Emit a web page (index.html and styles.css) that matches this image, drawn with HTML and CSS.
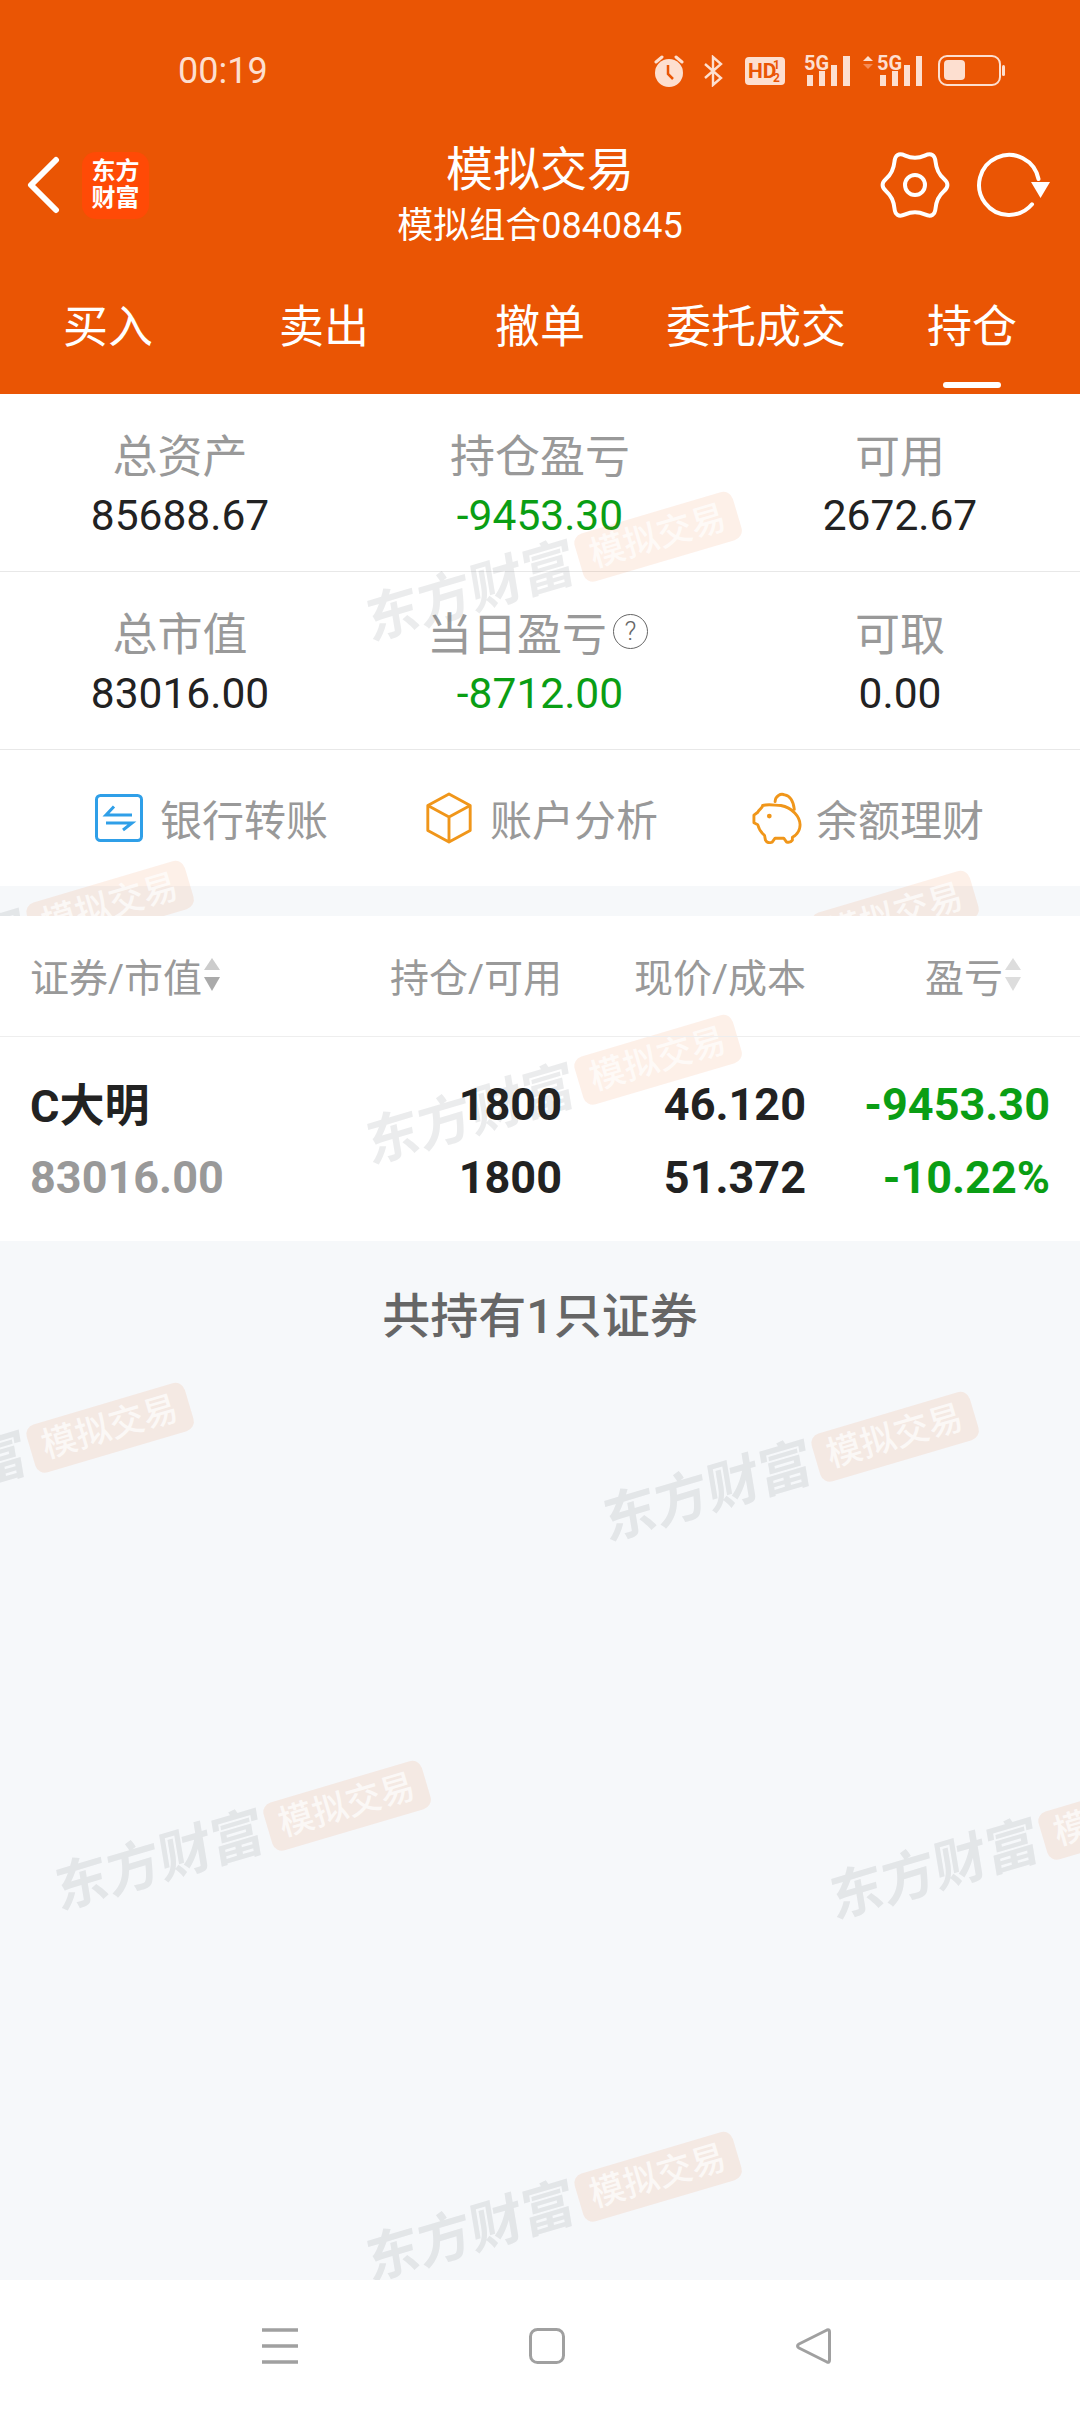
FILE: index.html
```html
<!DOCTYPE html>
<html lang="zh-CN">
<head>
    <meta charset="UTF-8">
    <meta name="viewport" content="width=device-width, initial-scale=1.0">
    <title>模拟交易</title>
    <link rel="stylesheet" href="styles.css">
</head>
<body>
<div class="screen">
    <header class="top">
        <div class="status">
            <span class="time">00:19</span>
            <div class="status-icons">
                <svg class="gap-18" width="32" height="32" viewBox="0 0 32 32">
                    <circle cx="16" cy="18" r="14" fill="#fddfd0"/>
                    <path d="M3 7 L9 2 M29 7 L23 2" stroke="#fddfd0" stroke-width="3" stroke-linecap="round"/>
                    <path d="M15 10 V19 L20 24" fill="none" stroke="#ea5504" stroke-width="2.5"/>
                </svg>
                <svg class="gap-22" width="20" height="32" viewBox="0 0 20 32">
                    <path d="M2 9 L18 23 L10 30 V2 L18 9 L2 23" fill="none" stroke="#fddfd0" stroke-width="2.4"/>
                </svg>
                <svg class="gap-19" width="40" height="28" viewBox="0 0 40 28">
                    <rect width="40" height="28" rx="4" fill="#fddfd0"/>
                    <text x="3" y="21" class="svg-hd">HD</text>
                    <text x="28" y="12" class="svg-frac">1</text>
                    <text x="28" y="25" class="svg-frac">2</text>
                </svg>
                <svg class="gap-13" width="46" height="32" viewBox="0 0 46 32">
                    <text x="0" y="15" class="svg-5g">5G</text>
                    <path d="M3 20 h6 v11 h-6z M15 16 h6 v15 h-6z M27 10 h6 v21 h-6z M39 1 h7 v30 h-7z" fill="#fddfd0"/>
                </svg>
                <svg class="gap-16" width="59" height="32" viewBox="0 0 59 32">
                    <path d="M0 6 L5 1 L10 6z" fill="#fddfd0"/>
                    <path d="M0 9 L5 14 L10 9z" fill="#f58a55"/>
                    <text x="14" y="15" class="svg-5g">5G</text>
                    <path d="M17 20 h6 v11 h-6z M29 16 h6 v15 h-6z M41 10 h6 v21 h-6z M53 1 h6 v30 h-6z" fill="#fddfd0"/>
                </svg>
                <svg width="67" height="32" viewBox="0 0 67 32">
                    <rect x="1" y="1" width="61" height="29" rx="8" fill="none" stroke="#fddfd0" stroke-width="2"/>
                    <rect x="6" y="5" width="21" height="20" rx="4" fill="#fddfd0"/>
                    <rect x="64" y="10" width="3" height="11" rx="1.5" fill="#fddfd0"/>
                </svg>
            </div>
        </div>

        <div class="nav">
            <div class="nav-side">
                <svg class="back" width="34" height="58" viewBox="0 0 34 58">
                    <path d="M30 4 L5 29 L30 54" fill="none" stroke="#fff" stroke-width="6" stroke-linecap="round" stroke-linejoin="round"/>
                </svg>
                <div class="logo">东方<br>财富</div>
            </div>
            <div class="nav-title">
                <div class="title">模拟交易</div>
                <div class="subtitle">模拟组合0840845</div>
            </div>
            <div class="nav-side nav-right">
                <svg width="80" height="80" viewBox="-40 -40 80 80">
                    <path d="M28.83 -6.25 Q21.65 -12.5 20.58 -23.14 Q19.5 -33.77 9.75 -29.39 Q0 -25 -9.75 -29.39 Q-19.5 -33.77 -20.58 -23.14 Q-21.65 -12.5 -28.83 -6.25 Q-36 0 -28.83 6.25 Q-21.65 12.5 -20.58 23.14 Q-19.5 33.77 -9.75 29.39 Q0 25 9.75 29.39 Q19.5 33.77 20.58 23.14 Q21.65 12.5 28.83 6.25 Q36 0 28.83 -6.25Z" fill="none" stroke="#fff" stroke-width="4" stroke-linejoin="round"/>
                    <circle r="10" fill="none" stroke="#fff" stroke-width="4"/>
                </svg>
                <svg class="refresh" width="80" height="80" viewBox="0 0 80 80">
                    <path d="M57 59.3 A30 30 0 1 1 63.5 34" fill="none" stroke="#fff" stroke-width="4" stroke-linecap="round"/>
                    <path d="M56 37 H75 L65.5 53Z" fill="#fff"/>
                </svg>
            </div>
        </div>

        <nav class="tabs">
            <a class="tab">买入</a>
            <a class="tab">卖出</a>
            <a class="tab">撤单</a>
            <a class="tab">委托成交</a>
            <a class="tab active">持仓</a>
        </nav>
    </header>

    <main class="content">
        <section class="summary">
            <div class="cell"><div class="cell-label">总资产</div><div class="cell-value">85688.67</div></div>
            <div class="cell"><div class="cell-label">持仓盈亏</div><div class="cell-value green">-9453.30</div></div>
            <div class="cell"><div class="cell-label">可用</div><div class="cell-value">2672.67</div></div>
        </section>
        <section class="summary">
            <div class="cell"><div class="cell-label">总市值</div><div class="cell-value">83016.00</div></div>
            <div class="cell">
                <div class="cell-label">当日盈亏<span class="help">?</span></div>
                <div class="cell-value green">-8712.00</div>
            </div>
            <div class="cell"><div class="cell-label">可取</div><div class="cell-value">0.00</div></div>
        </section>

        <section class="actions">
            <a class="action">
                <svg width="48" height="48" viewBox="0 0 48 48">
                    <rect x="1.500" y="1.500" width="45" height="45" rx="4" fill="none" stroke="#2f9fe8" stroke-width="3"/>
                    <path d="M19 12.500 L11 21 H37 M11 29 H37 L28 36" fill="none" stroke="#2f9fe8" stroke-width="3"/>
                </svg>
                银行转账
            </a>
            <a class="action">
                <svg width="48" height="52" viewBox="0 0 48 54">
                    <path d="M24 2 L46 14 V40 L24 52 L2 40 V14Z M2 14 L24 26 L46 14 M24 26 V52" fill="none" stroke="#f0961a" stroke-width="3" stroke-linejoin="round"/>
                </svg>
                账户分析
            </a>
            <a class="action action-save">
                <svg width="50" height="52" viewBox="0 0 52 54">
                    <path d="M11 14 C18 12 24 14 30 14 C42 16 50 26 50 34 C50 42 44 46 42 47 V50 Q40 53 36 52 L33 48 H24 L21 52 Q16 54 14 50 L13 45 C9 42 7 38 6 34 L2 32 V24 L6 21 C7 18 11 17 11 14Z" fill="none" stroke="#f0961a" stroke-width="3" stroke-linejoin="round"/>
                    <path d="M24 10 C24 4 30 1 34 3 C40 4 43 10 44 18" fill="none" stroke="#f0961a" stroke-width="3" stroke-linecap="round"/>
                    <circle cx="18" cy="25" r="2.500" fill="#f0961a"/>
                </svg>
                余额理财
            </a>
        </section>

        <section class="holdings">
            <div class="wm-layer">
                <div class="wm wm-table"><span class="wm-text">东方财富</span><span class="wm-badge">模拟交易</span></div>
            </div>
            <div class="row head">
                <div class="col-name">证券/市值<svg class="sort" width="18" height="34" viewBox="0 0 18 34"><path d="M9 0 L17 12 H1Z" fill="#ccc"/><path d="M9 33 L17 19 H1Z" fill="#aaa"/></svg></div>
                <div class="num">持仓/可用</div>
                <div class="num">现价/成本</div>
                <div class="num col-pl">盈亏<svg class="sort" width="18" height="34" viewBox="0 0 18 34"><path d="M9 0 L17 12 H1Z" fill="#ddd"/><path d="M9 33 L17 19 H1Z" fill="#ddd"/></svg></div>
            </div>
            <div class="row stock">
                <div class="stock-name">C大明</div>
                <div class="num">1800</div>
                <div class="num">46.120</div>
                <div class="num green">-9453.30</div>
                <div class="stock-cap">83016.00</div>
                <div class="num">1800</div>
                <div class="num">51.372</div>
                <div class="num green">-10.22%</div>
            </div>
        </section>

        <p class="total">共持有1只证券</p>
    </main>

    <div class="wm-layer wm-page">
        <div class="wm wm-1"><span class="wm-text">东方财富</span><span class="wm-badge">模拟交易</span></div>
        <div class="wm wm-2"><span class="wm-text">东方财富</span><span class="wm-badge">模拟交易</span></div>
        <div class="wm wm-3"><span class="wm-text">东方财富</span><span class="wm-badge">模拟交易</span></div>
        <div class="wm wm-4"><span class="wm-text">东方财富</span><span class="wm-badge">模拟交易</span></div>
        <div class="wm wm-5"><span class="wm-text">东方财富</span><span class="wm-badge">模拟交易</span></div>
        <div class="wm wm-6"><span class="wm-text">东方财富</span><span class="wm-badge">模拟交易</span></div>
        <div class="wm wm-7"><span class="wm-text">东方财富</span><span class="wm-badge">模拟交易</span></div>
        <div class="wm wm-8"><span class="wm-text">东方财富</span><span class="wm-badge">模拟交易</span></div>
    </div>

    <footer class="sysnav">
        <svg width="36" height="36" viewBox="0 0 36 36">
            <path d="M0 2 H36 M0 18 H36 M0 34 H36" stroke="#a0a0a0" stroke-width="3.5"/>
        </svg>
        <svg width="36" height="36" viewBox="0 0 36 36">
            <rect x="1.500" y="1.500" width="33" height="33" rx="7" fill="none" stroke="#a0a0a0" stroke-width="3"/>
        </svg>
        <svg width="35" height="36" viewBox="0 0 35 36">
            <path d="M31 2 Q33.500 1 33.500 4 V32 Q33.500 35 31 34 L3 20 Q0 18 3 16Z" fill="none" stroke="#a0a0a0" stroke-width="3" stroke-linejoin="round"/>
        </svg>
    </footer>
</div>
</body>
</html>
```

FILE: styles.css
```css
* {
    box-sizing: border-box;
}
body {
    margin: 0;
    font-family: Roboto, "Noto Sans CJK SC", sans-serif;
    color: #222;
}
.screen {
    position: relative;
    display: flex;
    flex-direction: column;
    width: 1080px;
    height: 2412px;
    overflow: hidden;
    background: #f6f8fa;
}
.green {
    color: #0a9e14;
}

/* orange header */
.top {
    position: relative;
    z-index: 3;
    height: 394px;
    background: #ea5504;
    color: #fff;
}
.status {
    display: flex;
    justify-content: space-between;
    align-items: center;
    height: 142px;
    padding: 0 75px 0 178px;
    color: #fddfd0;
}
.time {
    font-size: 36px;
}
.status-icons {
    display: flex;
    align-items: center;
}
.gap-13 { margin-right: 13px; }
.gap-16 { margin-right: 16px; }
.gap-18 { margin-right: 18px; }
.gap-19 { margin-right: 19px; }
.gap-22 { margin-right: 22px; }
.svg-hd {
    font-size: 21px;
    font-weight: 700;
    fill: #ea5504;
}
.svg-frac {
    font-size: 12px;
    font-weight: 700;
    fill: #ea5504;
}
.svg-5g {
    font-size: 20px;
    font-weight: 700;
    fill: #fddfd0;
}
.nav {
    display: grid;
    grid-template-columns: 1fr auto 1fr;
    height: 120px;
}
.nav-side {
    display: flex;
    align-items: center;
    height: 86px;
}
.nav-right {
    justify-content: flex-end;
    padding-right: 25px;
}
.back {
    margin: 0 22px 0 26px;
}
.logo {
    width: 67px;
    height: 67px;
    border-radius: 14px;
    background: #ff4a06;
    font-size: 24px;
    font-weight: 700;
    line-height: 27px;
    text-align: center;
    padding-top: 6px;
}
.refresh {
    margin-left: 20px;
}
.nav-title {
    text-align: center;
    line-height: 56px;
}
.title {
    font-size: 47px;
}
.subtitle {
    font-size: 36px;
}
.tabs {
    display: grid;
    grid-template-columns: repeat(5, 1fr);
    height: 132px;
}
.tab {
    position: relative;
    display: flex;
    align-items: center;
    justify-content: center;
    padding-bottom: 10px;
    font-size: 45px;
}
.tab.active::after {
    content: "";
    position: absolute;
    left: 79px;
    bottom: 6px;
    width: 58px;
    height: 6px;
    border-radius: 3px;
    background: #fff;
}

/* summary cells */
.summary {
    display: grid;
    grid-template-columns: repeat(3, 1fr);
    height: 178px;
    background: #fff;
    border-bottom: 1px solid #e8e8e8;
    text-align: center;
}
.cell {
    padding-top: 31px;
}
.cell-label {
    display: flex;
    align-items: center;
    justify-content: center;
    height: 56px;
    margin-bottom: 2px;
    font-size: 45px;
    color: #999;
}
.cell-value {
    font-size: 42.500px;
    line-height: 66px;
}
.help {
    width: 35px;
    height: 35px;
    margin: 0 5px 0 6px;
    border: 1.5px solid #666;
    border-radius: 50%;
    font-size: 26px;
    font-weight: 300;
    line-height: 32px;
    color: #666;
}

.actions {
    display: flex;
    align-items: center;
    gap: 97px;
    height: 136px;
    padding: 0 0 2px 95px;
    background: #fff;
}
.action {
    display: flex;
    align-items: center;
    gap: 17px;
    font-size: 42px;
    color: #999;
}
.action svg {
    margin-top: 2px;
}
.action-save {
    gap: 14px;
    margin-left: -3px;
}

/* holdings table */
.holdings {
    position: relative;
    z-index: 2;
    margin-top: 30px;
    background: #fff;
}
.row {
    position: relative;
    display: grid;
    grid-template-columns: 1fr 244px 244px 244px;
    padding: 0 30px;
}
.head {
    align-items: center;
    height: 121px;
    padding-bottom: 2px;
    border-bottom: 1px solid #eee;
    font-size: 39px;
    color: #999;
}
.col-name {
    display: flex;
    align-items: center;
}
.sort {
    margin-left: 1px;
}
.col-pl {
    display: flex;
    align-items: center;
    justify-content: flex-end;
    padding-right: 28px;
}
.stock {
    height: 204px;
    padding-top: 31px;
    grid-auto-rows: 73px;
    align-items: center;
    font-size: 45px;
    font-weight: 700;
}
.stock-name {
    padding-bottom: 5px;
}
.num {
    text-align: right;
}
.stock-cap {
    color: #999;
}
.total {
    margin: 46px 0 0;
    font-size: 48px;
    font-weight: 500;
    line-height: 60px;
    text-align: center;
    color: #666;
}
.content {
    flex: 1;
}

/* diagonal watermark */
.wm-layer {
    position: absolute;
    inset: 0;
    overflow: hidden;
    pointer-events: none;
}
.wm-page {
    z-index: 1;
}
.wm {
    position: absolute;
    display: flex;
    align-items: center;
    gap: 5px;
    transform: rotate(-16.500deg);
    transform-origin: 0 0;
    white-space: nowrap;
}
.wm-text {
    width: 216px;
    font-size: 54px;
    font-weight: 700;
    line-height: 50px;
    color: rgba(110, 120, 130, 0.14);
    transform: skewX(-7deg);
}
.wm-badge {
    width: 165px;
    height: 50px;
    border-radius: 10px;
    background: rgba(234, 85, 4, 0.09);
    font-size: 35px;
    font-weight: 500;
    line-height: 50px;
    text-align: center;
    color: rgba(255, 255, 255, 0.7);
}
.wm-table { left: 360px; top: 206px; }
.wm-1 { left: 360px; top: 599px; }
.wm-2 { left: -188px; top: 968px; }
.wm-3 { left: 597px; top: 978px; }
.wm-4 { left: -188px; top: 1490px; }
.wm-5 { left: 597px; top: 1499px; }
.wm-6 { left: 49px; top: 1868px; }
.wm-7 { left: 824px; top: 1877px; }
.wm-8 { left: 360px; top: 2239px; }

/* system navigation */
.sysnav {
    position: relative;
    z-index: 3;
    display: flex;
    justify-content: space-between;
    align-items: center;
    height: 132px;
    padding: 0 249px 0 262px;
    background: #fff;
}
```
